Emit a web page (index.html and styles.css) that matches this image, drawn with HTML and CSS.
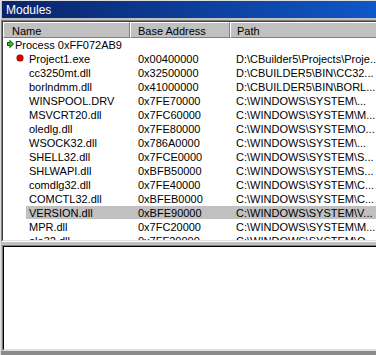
FILE: index.html
```html
<!DOCTYPE html>
<html>
<head>
<title>Modules</title>
<link rel="stylesheet" href="styles.css">
</head>
<body>
<div class="window">
<div class="caption">Modules</div>
<div class="list">
<div class="list-inner">
<div class="header">
<div class="hcell c-name">Name</div>
<div class="hcell c-base">Base Address</div>
<div class="hcell c-path">Path</div>
</div>
<div class="rows">
<div class="row proc">
<svg class="arrow" width="7" height="8" viewBox="0 0 7 8"><polygon points="0.5,2.5 3,2.5 3,0.5 6.5,4 3,7.5 3,5.5 0.5,5.5" fill="#1fd11f" stroke="#0a4a0a" stroke-width="1"/></svg>
<span>Process 0xFF072AB9</span>
</div>
<div class="row"><div class="cell c-name has-dot"><span class="dot"></span>Project1.exe</div><div class="cell c-base">0x00400000</div><div class="cell c-path">D:\CBuilder5\Projects\Proje...</div></div>
<div class="row"><div class="cell c-name">cc3250mt.dll</div><div class="cell c-base">0x32500000</div><div class="cell c-path">D:\CBUILDER5\BIN\CC32...</div></div>
<div class="row"><div class="cell c-name">borlndmm.dll</div><div class="cell c-base">0x41000000</div><div class="cell c-path">D:\CBUILDER5\BIN\BORL...</div></div>
<div class="row"><div class="cell c-name">WINSPOOL.DRV</div><div class="cell c-base">0x7FE70000</div><div class="cell c-path">C:\WINDOWS\SYSTEM\...</div></div>
<div class="row"><div class="cell c-name">MSVCRT20.dll</div><div class="cell c-base">0x7FC60000</div><div class="cell c-path">C:\WINDOWS\SYSTEM\M...</div></div>
<div class="row"><div class="cell c-name">oledlg.dll</div><div class="cell c-base">0x7FE80000</div><div class="cell c-path">C:\WINDOWS\SYSTEM\O...</div></div>
<div class="row"><div class="cell c-name">WSOCK32.dll</div><div class="cell c-base">0x786A0000</div><div class="cell c-path">C:\WINDOWS\SYSTEM\...</div></div>
<div class="row"><div class="cell c-name">SHELL32.dll</div><div class="cell c-base">0x7FCE0000</div><div class="cell c-path">C:\WINDOWS\SYSTEM\S...</div></div>
<div class="row"><div class="cell c-name">SHLWAPI.dll</div><div class="cell c-base">0xBFB50000</div><div class="cell c-path">C:\WINDOWS\SYSTEM\S...</div></div>
<div class="row"><div class="cell c-name">comdlg32.dll</div><div class="cell c-base">0x7FE40000</div><div class="cell c-path">C:\WINDOWS\SYSTEM\C...</div></div>
<div class="row"><div class="cell c-name">COMCTL32.dll</div><div class="cell c-base">0xBFEB0000</div><div class="cell c-path">C:\WINDOWS\SYSTEM\C...</div></div>
<div class="row sel"><div class="cell c-name">VERSION.dll</div><div class="cell c-base">0xBFE90000</div><div class="cell c-path">C:\WINDOWS\SYSTEM\V...</div></div>
<div class="row"><div class="cell c-name">MPR.dll</div><div class="cell c-base">0x7FC20000</div><div class="cell c-path">C:\WINDOWS\SYSTEM\M...</div></div>
<div class="row"><div class="cell c-name">ole32.dll</div><div class="cell c-base">0x7FF20000</div><div class="cell c-path">C:\WINDOWS\SYSTEM\O...</div></div>
</div>
</div>
</div>
<div class="splitter"></div>
<div class="panel"><div class="panel-inner"></div></div>
<div class="footer"></div>
</div>
</body>
</html>
```
FILE: styles.css
```css
body {
  margin: 0;
  width: 376px;
  height: 355px;
  overflow: hidden;
  background-color: #c0c0c0;
  font-family: "Liberation Sans", Arial, sans-serif;
  font-size: 11px;
  color: #000;
}

.window {
  width: 380px;
  height: 355px;
  box-sizing: border-box;
  border-top: 1px solid #dfdfdf;
  border-left: 1px solid #dfdfdf;
}

/* caption bar */
.caption {
  height: 17px;
  box-sizing: border-box;
  margin-left: 1px;
  margin-bottom: 2px;
  padding: 3px 0 0 4px;
  font-size: 12px;
  line-height: 13px;
  color: #fff;
  background: linear-gradient(to right, #0a246a, #0f58c8);
}

/* module list */
.list {
  height: 222px;
  box-sizing: border-box;
  border: 1px solid;
  border-color: #808080 #fff #fff #808080;
}

.list-inner {
  height: 220px;
  box-sizing: border-box;
  border: 1px solid;
  border-color: #404040 #dfdfdf #dfdfdf #404040;
  background-color: #fff;
  overflow: hidden;
}

.header {
  display: flex;
  height: 16px;
  background-color: #c0c0c0;
}

.hcell {
  height: 16px;
  box-sizing: border-box;
  border: 1px solid;
  border-color: #fff #808080 #808080 #fff;
  padding-top: 2px;
  line-height: 12px;
  white-space: nowrap;
}

.hcell.c-name {
  width: 127px;
  padding-left: 8px;
}

.hcell.c-base {
  width: 100px;
  padding-left: 7px;
}

.hcell.c-path {
  flex: 1;
  padding-left: 6px;
}

.rows {
  height: 202px;
  overflow: hidden;
}

.row {
  display: flex;
  align-items: center;
  height: 14px;
  line-height: 14px;
  white-space: nowrap;
}

.row.sel {
  background: linear-gradient(to right, transparent 23px, #c0c0c0 23px) no-repeat;
  background-size: 100% 13px;
}

.row.proc {
  padding-left: 4px;
}

.arrow {
  margin-right: 1px;
  margin-top: -2px;
}

.cell {
  overflow: hidden;
}

.cell.c-name {
  width: 127px;
  padding-left: 26px;
  box-sizing: border-box;
}

.cell.c-name.has-dot {
  display: flex;
  align-items: center;
  padding-left: 14px;
}

.dot {
  width: 6px;
  height: 6px;
  margin-right: 6px;
  margin-top: -2px;
  border-radius: 50%;
  background-color: #e00000;
  box-shadow: 0 0 0 0.5px #600;
}

.cell.c-base {
  width: 100px;
  padding-left: 8px;
  box-sizing: border-box;
}

.cell.c-path {
  flex: 1;
  padding-left: 6px;
}

/* splitter and lower pane */
.splitter {
  height: 3px;
}

.panel {
  height: 106px;
  box-sizing: border-box;
  margin-left: 1px;
  border: 1px solid;
  border-color: #808080 #fff #dfdfdf #808080;
}

.panel-inner {
  height: 104px;
  box-sizing: border-box;
  border: 1px solid;
  border-color: #000 #dfdfdf #dfdfdf #000;
  background-color: #fff;
}

.footer {
  height: 4px;
  background-color: #8a8a8a;
}
```
